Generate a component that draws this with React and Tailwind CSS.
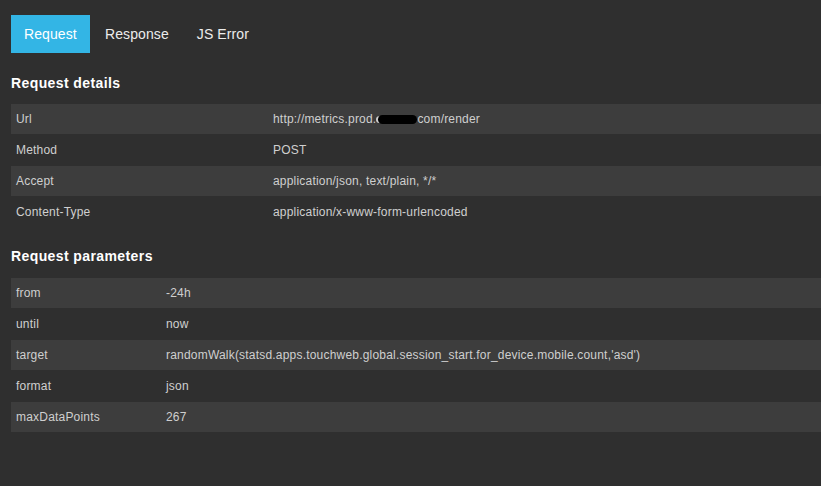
import React from "react";

const details = [
  ["Url", "http://metrics.prod.", "com/render", true],
  ["Method", "POST"],
  ["Accept", "application/json, text/plain, */*"],
  ["Content-Type", "application/x-www-form-urlencoded"],
];

const params = [
  ["from", "-24h"],
  ["until", "now"],
  ["target", "randomWalk(statsd.apps.touchweb.global.session_start.for_device.mobile.count,'asd')"],
  ["format", "json"],
  ["maxDataPoints", "267"],
];

function Table({ rows, keyW }) {
  return (
    <div className="flex flex-col gap-[1px]">
      {rows.map((r, i) => (
        <div
          key={i}
          className={`flex h-[30px] items-center text-[12px] tracking-[0.2px] text-[#cfcfcf] ${i % 2 === 0 ? "bg-[#3d3d3d]" : ""}`}
        >
          <div className={`${keyW} shrink-0 pl-[5px]`}>{r[0]}</div>
          <div className="pl-[5px] whitespace-nowrap flex items-center">
            {r[3] ? (
              <>
                <span>{r[1]}</span>
                <span className="relative inline-block w-[41px] h-[9px]">
                  <span className="absolute left-[0px] top-[1px] w-[4px] h-[7px] bg-[#cfcfcf] rounded-l-sm"></span>
                  <span className="absolute left-[2px] top-[0px] w-[39px] h-[9px] bg-black rounded-full"></span>
                </span>
                <span>{r[2]}</span>
              </>
            ) : (
              r[1]
            )}
          </div>
        </div>
      ))}
    </div>
  );
}

export default function App() {
  return (
    <div
      className="w-[821px] h-[486px] bg-[#2f2f2f] pl-[11px] pt-[15px]"
      style={{ fontFamily: '"Liberation Sans", Arial, sans-serif' }}
    >
      <div className="flex gap-[2px] text-[14px] tracking-[0.1px]">
        <div className="h-[38px] px-[13px] w-[79px] flex items-center bg-[#33b5e5] text-white">Request</div>
        <div className="h-[38px] px-[13px] flex items-center text-[#ececec]">Response</div>
        <div className="h-[38px] px-[13px] flex items-center text-[#ececec]">JS Error</div>
      </div>
      <div className="mt-[22px] text-[14px] leading-[16px] font-bold tracking-[0.4px] text-white">Request details</div>
      <div className="mt-[13px]">
        <Table rows={details} keyW="w-[257px]" />
      </div>
      <div className="mt-[21px] text-[14px] leading-[16px] font-bold tracking-[0.4px] text-white">Request parameters</div>
      <div className="mt-[14px]">
        <Table rows={params} keyW="w-[150px]" />
      </div>
    </div>
  );
}
